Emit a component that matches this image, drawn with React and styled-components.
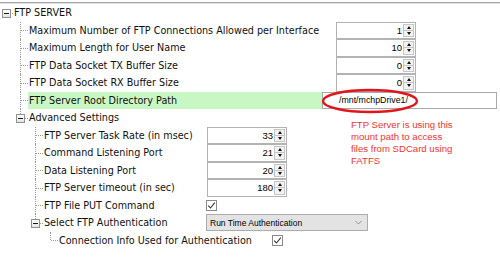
import React from "react";
import styled, { createGlobalStyle } from "styled-components";

const GlobalStyle = createGlobalStyle`
  html, body {
    margin: 0;
    padding: 0;
    background: #fff;
  }
  body {
    font-family: "DejaVu Sans", Verdana, sans-serif;
  }
`;

const Page = styled.div`
  width: 500px;
  height: 257px;
  padding-top: 2px;
  box-sizing: border-box;
  overflow: hidden;
`;

const Frame = styled.div`
  position: relative;
  height: 100%;
  border-top: 1px solid #a2a2a2;
  box-shadow: inset 0 1px 0 #e4e4e4;
`;

const Tree = styled.div`
  display: flex;
  flex-direction: column;
  padding-top: 1px;
`;

const Row = styled.div`
  display: flex;
  align-items: center;
  height: 17.5px;
`;

const lineKinds = ["tee", "ell", "pipe"];
const armKinds = ["tee", "ell", "root"];

const Guide = styled.span`
  position: relative;
  flex: 0 0 ${(p) => (p.$first ? 13 : 15)}px;
  align-self: stretch;

  &::before {
    content: "";
    display: ${(p) => (lineKinds.includes(p.$kind) ? "block" : "none")};
    position: absolute;
    left: 7px;
    top: 0;
    height: ${(p) => (p.$kind === "ell" ? "50%" : "100%")};
    border-left: 1px dotted #9a9a9a;
  }
  &::after {
    content: "";
    display: ${(p) => (armKinds.includes(p.$kind) ? "block" : "none")};
    position: absolute;
    left: ${(p) => (p.$first ? 6 : 8)}px;
    right: 0;
    top: 50%;
    border-top: 1px dotted #9a9a9a;
  }
`;

const Expander = styled.span`
  position: absolute;
  z-index: 1;
  left: ${(p) => (p.$first ? 2 : 3)}px;
  top: 50%;
  margin-top: -4px;
  width: 9px;
  height: 9px;
  box-sizing: border-box;
  border: 1px solid #919191;
  background: linear-gradient(#ffffff, #e4e4e4);

  &::after {
    content: "";
    position: absolute;
    left: 1px;
    right: 1px;
    top: 3px;
    height: 1px;
    background: #1a1a1a;
  }
`;

const Label = styled.span`
  flex: 0 0 ${(p) => p.$w}px;
  box-sizing: border-box;
  align-self: stretch;
  display: flex;
  align-items: center;
  padding-left: 1px;
  font-size: 9.65px;
  color: #111;
  white-space: nowrap;
  background: ${(p) => (p.$hl ? "#c9f7c4" : "transparent")};
`;

const Spin = styled.div`
  display: flex;
  width: 80px;
  height: 17.5px;
  margin-left: ${(p) => p.$x || 0}px;
  box-sizing: border-box;
  border: 1px solid #b3b3b3;
  background: #fff;
  padding: 1px;
`;

const SpinValue = styled.span`
  flex: 1;
  text-align: right;
  padding-right: 1px;
  font-family: "Liberation Sans", Arial, sans-serif;
  font-size: 9.5px;
  line-height: 13.5px;
  color: #000;
`;

const SpinButtons = styled.span`
  flex: 0 0 11px;
  display: flex;
  flex-direction: column;
`;

const SpinBtn = styled.span`
  flex: 1;
  display: flex;
  align-items: center;
  justify-content: center;
  border: 1px solid #c6c6c6;
  background: #f2f2f2;
  & + & {
    border-top: none;
  }
`;

const Tri = styled.span`
  width: 0;
  height: 0;
  border-left: 2.5px solid transparent;
  border-right: 2.5px solid transparent;
  ${(p) =>
    p.$up
      ? "border-bottom: 3px solid #111;"
      : "border-top: 3px solid #111;"}
`;

const TextField = styled.div`
  width: 175px;
  height: 17px;
  box-sizing: border-box;
  border: 1px solid #a9a9a9;
  padding-left: 16px;
  font-family: "Liberation Sans", Arial, sans-serif;
  font-size: 8.8px;
  line-height: 15px;
  color: #000;
  background: #fff;
`;

const Check = styled.span`
  display: flex;
  align-items: center;
  justify-content: center;
  width: 11px;
  height: 11px;
  box-sizing: border-box;
  border: 1px solid #8a8a8a;
  background: #fff;
`;

const Select = styled.div`
  display: flex;
  align-items: center;
  justify-content: space-between;
  width: 162px;
  height: 17px;
  box-sizing: border-box;
  border: 1px solid #acacac;
  background: #e3e3e3;
  padding: 0 5px 0 3px;
  font-family: "Liberation Sans", Arial, sans-serif;
  font-size: 8.5px;
  color: #000;
`;

const Note = styled.div`
  position: absolute;
  left: 351px;
  top: 116px;
  font-family: "Liberation Sans", Arial, sans-serif;
  font-size: 9.6px;
  line-height: 12px;
  color: #f03434;
`;

const Ring = styled.svg`
  position: absolute;
  left: 320px;
  top: 84px;
  pointer-events: none;
`;

const Tick = () => (
  <svg width="9" height="9" viewBox="0 0 9 9">
    <path d="M1.2 4.6 L3.5 7 L7.8 1.6" fill="none" stroke="#3a3a3a" strokeWidth="1.1" />
  </svg>
);

const Chevron = () => (
  <svg width="7" height="5" viewBox="0 0 7 5">
    <path d="M0.5 1 L3.5 4 L6.5 1" fill="none" stroke="#8a8a8a" strokeWidth="0.9" />
  </svg>
);

const Spinner = ({ value, x }) => (
  <Spin $x={x}>
    <SpinValue>{value}</SpinValue>
    <SpinButtons>
      <SpinBtn>
        <Tri $up />
      </SpinBtn>
      <SpinBtn>
        <Tri />
      </SpinBtn>
    </SpinButtons>
  </Spin>
);

const TreeRow = ({ guides, conn, expander, label, col, hl, children }) => {
  const depth = guides.length;
  const start = 13 + 15 * depth;
  return (
    <Row>
      {guides.map((g, i) => (
        <Guide key={i} $first={i === 0} $kind={g} />
      ))}
      <Guide $first={depth === 0} $kind={conn}>
        {expander && <Expander $first={depth === 0} />}
      </Guide>
      <Label $w={col - start} $hl={hl}>
        {label}
      </Label>
      {children}
    </Row>
  );
};

const App = () => {
  return (
    <Page>
      <GlobalStyle />
      <Frame>
        <Tree>
          <TreeRow guides={[]} conn="root" expander label="FTP SERVER" col={322} />
          <TreeRow guides={["blank"]} conn="tee" label="Maximum Number of FTP Connections Allowed per Interface" col={322}>
            <Spinner value="1" x={14} />
          </TreeRow>
          <TreeRow guides={["blank"]} conn="tee" label="Maximum Length for User Name" col={322}>
            <Spinner value="10" x={14} />
          </TreeRow>
          <TreeRow guides={["blank"]} conn="tee" label="FTP Data Socket TX Buffer Size" col={322}>
            <Spinner value="0" x={14} />
          </TreeRow>
          <TreeRow guides={["blank"]} conn="tee" label="FTP Data Socket RX Buffer Size" col={322}>
            <Spinner value="0" x={14} />
          </TreeRow>
          <TreeRow guides={["blank"]} conn="tee" label="FTP Server Root Directory Path" col={322} hl>
            <TextField>/mnt/mchpDrive1/</TextField>
          </TreeRow>
          <TreeRow guides={["blank"]} conn="ell" expander label="Advanced Settings" col={322} />
          <TreeRow guides={["blank", "blank"]} conn="tee" label="FTP Server Task Rate (in msec)" col={207}>
            <Spinner value="33" />
          </TreeRow>
          <TreeRow guides={["blank", "blank"]} conn="tee" label="Command Listening Port" col={207}>
            <Spinner value="21" />
          </TreeRow>
          <TreeRow guides={["blank", "blank"]} conn="tee" label="Data Listening Port" col={207}>
            <Spinner value="20" />
          </TreeRow>
          <TreeRow guides={["blank", "blank"]} conn="tee" label="FTP Server timeout (in sec)" col={207}>
            <Spinner value="180" />
          </TreeRow>
          <TreeRow guides={["blank", "blank"]} conn="tee" label="FTP File PUT Command" col={206}>
            <Check>
              <Tick />
            </Check>
          </TreeRow>
          <TreeRow guides={["blank", "blank"]} conn="ell" expander label="Select FTP Authentication" col={206}>
            <Select>
              <span>Run Time Authentication</span>
              <Chevron />
            </Select>
          </TreeRow>
          <TreeRow guides={["blank", "blank", "blank"]} conn="ell" label="Connection Info Used for Authentication" col={272}>
            <Check>
              <Tick />
            </Check>
          </TreeRow>
        </Tree>

        <Ring width="100" height="28" viewBox="0 0 100 28">
          <ellipse cx="50" cy="14" rx="47" ry="11" fill="none" stroke="#e3141c" strokeWidth="2.4" />
        </Ring>

        <Note>
          FTP Server is using this
          <br />
          mount path to access
          <br />
          files from SDCard using
          <br />
          FATFS
        </Note>
      </Frame>
    </Page>
  );
};

export default App;
